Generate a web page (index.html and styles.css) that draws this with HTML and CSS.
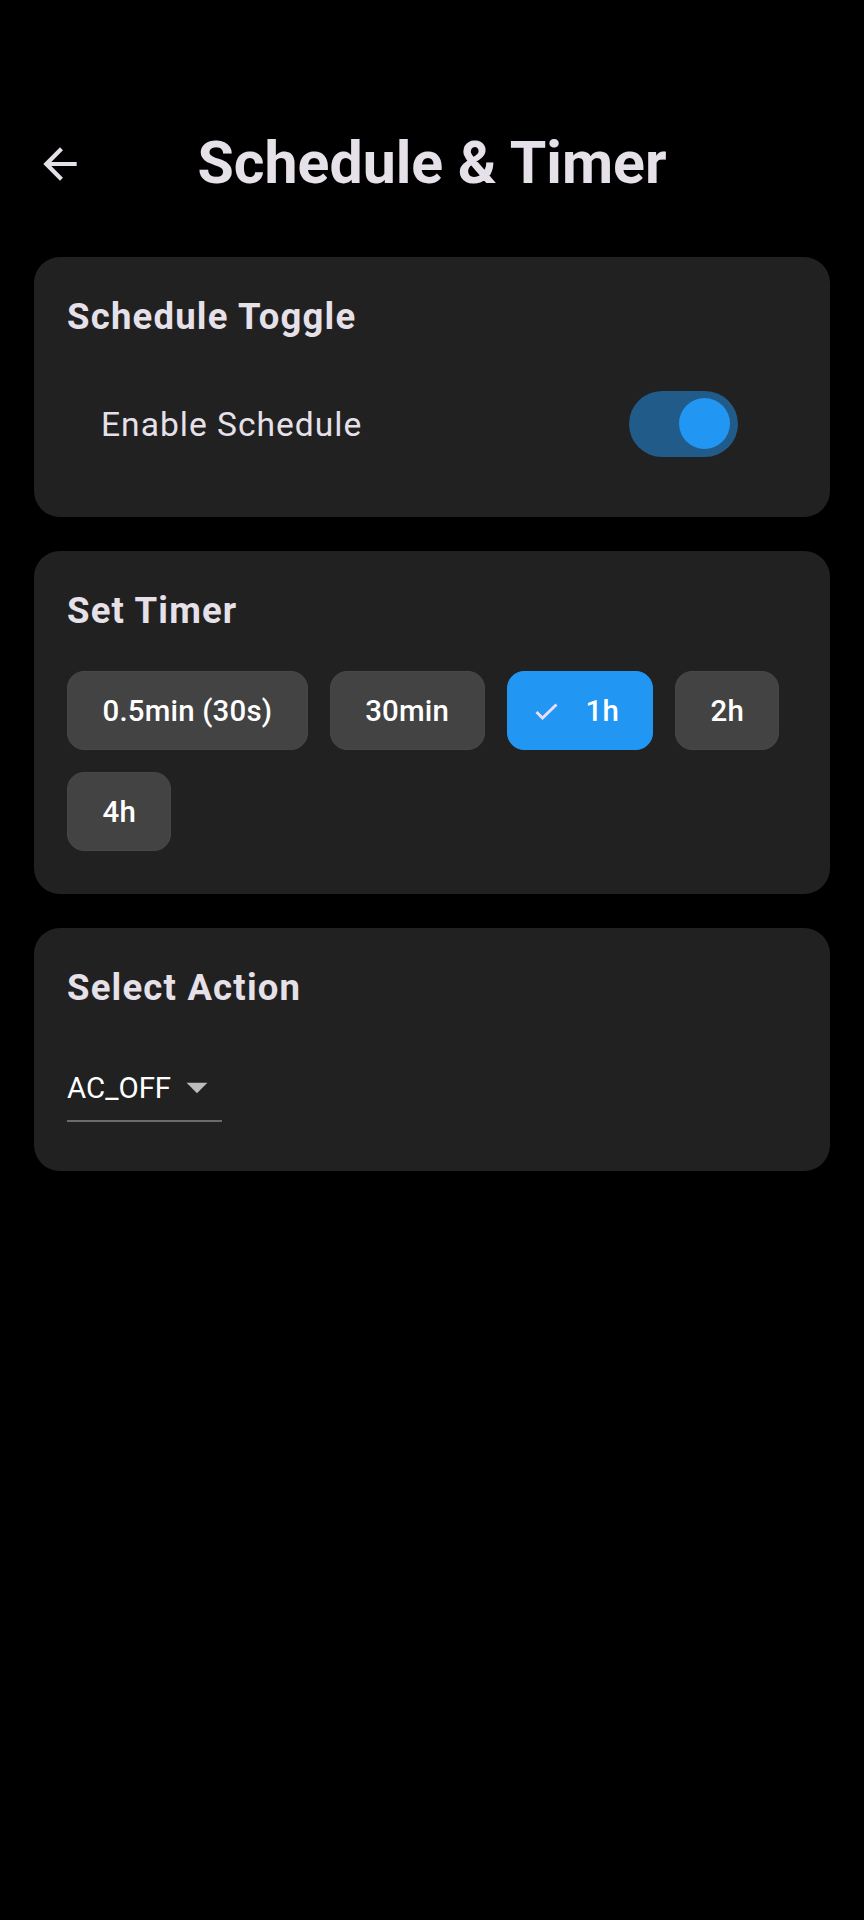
FILE: index.html
```html
<!DOCTYPE html>
<html lang="en">
<head>
<meta charset="utf-8">
<title>Schedule &amp; Timer</title>
<link rel="stylesheet" href="styles.css">
</head>
<body>
<header class="appbar">
  <div class="back">
    <svg viewBox="0 0 24 24" width="50" height="50"><path d="M20 11H7.83l5.59-5.59L12 4l-8 8 8 8 1.41-1.41L7.83 13H20v-2z" fill="#e6e0e9"/></svg>
  </div>
  <h1 class="title">Schedule &amp; Timer</h1>
</header>
<main class="content">
  <section class="card card-toggle">
    <h2 class="card-title">Schedule Toggle</h2>
    <div class="tile">
      <span class="tile-label">Enable Schedule</span>
      <div class="switch"><div class="thumb"></div></div>
    </div>
  </section>
  <section class="card card-timer">
    <h2 class="card-title">Set Timer</h2>
    <div class="chips">
      <div class="chip">0.5min (30s)</div>
      <div class="chip">30min</div>
      <div class="chip chip-selected">
        <svg class="check" viewBox="0 0 23 17" width="23" height="17"><path d="M1.5 9 L7.5 15 L21.5 1.5" fill="none" stroke="#e8def8" stroke-width="3"/></svg>
        <span>1h</span>
      </div>
      <div class="chip">2h</div>
      <div class="chip">4h</div>
    </div>
  </section>
  <section class="card card-action">
    <h2 class="card-title">Select Action</h2>
    <div class="dropdown">
      <span class="dropdown-value">AC_OFF</span>
      <span class="dropdown-icon">
        <svg viewBox="0 0 24 24" width="50" height="50"><path d="M7 10l5 5 5-5z" fill="#bdbdbd"/></svg>
      </span>
    </div>
  </section>
</main>
</body>
</html>
```
FILE: styles.css
```css
* { box-sizing: border-box; }
html, body {
  margin: 0;
  padding: 0;
  background: #000;
}
body {
  font-family: Roboto, "Noto Sans", "Liberation Sans", sans-serif;
  color: #e6e0e9;
  width: 864px;
  min-height: 1920px;
}
.appbar {
  margin-top: 104px;
  height: 118px;
  display: flex;
  align-items: center;
  padding-left: 35px;
}
.back {
  width: 50px;
  height: 50px;
  display: flex;
  margin-top: 2px;
}
.title {
  margin: 0;
  font-size: 59px;
  line-height: 118px;
  font-weight: 700;
  color: #e6e0e9;
  flex: 1;
  text-align: center;
  margin-right: 85px;
  letter-spacing: 0;
}
.content {
  padding: 35px 34px;
  display: flex;
  flex-direction: column;
  gap: 34px;
}
.card {
  background: #212121;
  border-radius: 26px;
  padding: 38px 34px 34px 33px;
}
.card-title {
  margin: 0;
  font-size: 36.5px;
  line-height: 44px;
  font-weight: 700;
  letter-spacing: 1.2px;
  color: #e6e0e9;
}
.tile {
  margin-top: 26px;
  height: 118px;
  display: flex;
  align-items: center;
  justify-content: space-between;
  padding-left: 34px;
  padding-right: 58px;
}
.tile-label {
  font-size: 33.6px;
  letter-spacing: 1px;
  color: #e6e0e9;
  font-weight: 400;
}
.switch {
  width: 109px;
  height: 66px;
  border-radius: 33px;
  background: #215b8a;
  display: flex;
  align-items: center;
  justify-content: flex-end;
  padding: 0 8px 2px 0;
}
.thumb {
  width: 51px;
  height: 51px;
  border-radius: 50%;
  background: #2196f3;
}
.card-timer {
  padding-bottom: 43px;
}
.chips {
  margin-top: 38px;
  display: flex;
  flex-wrap: wrap;
  gap: 22px;
}
.chip {
  height: 79px;
  display: flex;
  align-items: center;
  padding: 0 34.5px;
  border: 1.5px solid #49454f;
  border-radius: 17px;
  background: #434343;
  color: #fff;
  font-size: 29.4px;
  font-weight: 500;
  letter-spacing: 0.2px;
}
.chip-selected {
  background: #2196f3;
  border-color: #2196f3;
  padding: 0 33px 0 27px;
  gap: 28px;
}
.check {
  display: block;
  margin-top: 1px;
}
.card-action {
  padding-bottom: 49px;
}
.dropdown {
  margin-top: 58px;
  display: inline-flex;
  align-items: center;
  height: 54px;
  padding-bottom: 12px;
  border-bottom: 2px solid #6b6b6b;
}
.dropdown-value {
  font-size: 29.4px;
  line-height: 40px;
  color: #fff;
}
.dropdown-icon {
  width: 50px;
  height: 40px;
  display: flex;
  align-items: center;
  justify-content: center;
  margin-left: 1px;
}
.dropdown-icon svg {
  display: block;
  margin-top: -2px;
}
```
